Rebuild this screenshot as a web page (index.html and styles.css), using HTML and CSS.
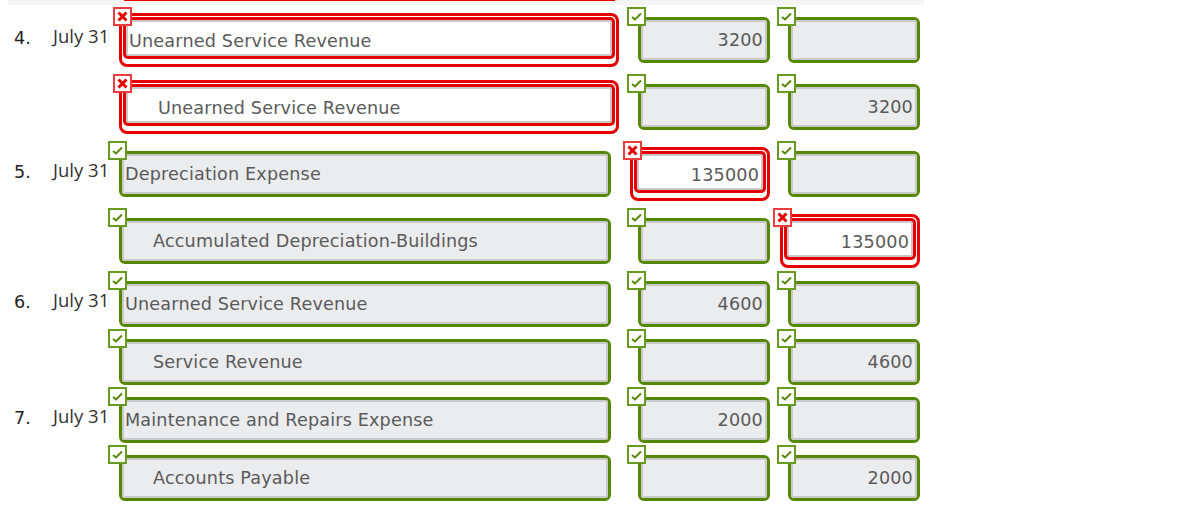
FILE: index.html
```html
<!DOCTYPE html>
<html lang="en">
<head>
  <meta charset="UTF-8">
  <title>Journal Entries</title>
  <link rel="stylesheet" href="styles.css">
</head>
<body>
  <svg class="defs" width="0" height="0">
    <symbol id="tick" viewBox="0 0 15 15"><path d="M3 8 L6 10.5 L12 4.5" fill="none" stroke="#558800" stroke-width="2"/></symbol>
    <symbol id="cross" viewBox="0 0 15 15"><path d="M3.5 3.5 L11.5 11.5 M11.5 3.5 L3.5 11.5" fill="none" stroke="#e60000" stroke-width="3"/></symbol>
  </svg>

  <div class="strip"><div class="prev-edge"></div></div>

  <div class="row first">
    <div class="num">4.</div>
    <div class="date">July 31</div>
    <div class="field account bad"><svg class="badge"><use href="#cross"/></svg><div class="val">Unearned Service Revenue</div></div>
    <div class="field debit"><svg class="badge"><use href="#tick"/></svg><div class="val">3200</div></div>
    <div class="field credit"><svg class="badge"><use href="#tick"/></svg><div class="val"></div></div>
  </div>
  <div class="row loose">
    <div class="num"></div>
    <div class="date"></div>
    <div class="field account bad"><svg class="badge"><use href="#cross"/></svg><div class="val indent">Unearned Service Revenue</div></div>
    <div class="field debit"><svg class="badge"><use href="#tick"/></svg><div class="val"></div></div>
    <div class="field credit"><svg class="badge"><use href="#tick"/></svg><div class="val">3200</div></div>
  </div>

  <div class="row loose">
    <div class="num">5.</div>
    <div class="date">July 31</div>
    <div class="field account"><svg class="badge"><use href="#tick"/></svg><div class="val">Depreciation Expense</div></div>
    <div class="field debit bad"><svg class="badge"><use href="#cross"/></svg><div class="val">135000</div></div>
    <div class="field credit"><svg class="badge"><use href="#tick"/></svg><div class="val"></div></div>
  </div>
  <div class="row loose">
    <div class="num"></div>
    <div class="date"></div>
    <div class="field account"><svg class="badge"><use href="#tick"/></svg><div class="val indent">Accumulated Depreciation-Buildings</div></div>
    <div class="field debit"><svg class="badge"><use href="#tick"/></svg><div class="val"></div></div>
    <div class="field credit bad"><svg class="badge"><use href="#cross"/></svg><div class="val">135000</div></div>
  </div>

  <div class="row mid">
    <div class="num">6.</div>
    <div class="date">July 31</div>
    <div class="field account"><svg class="badge"><use href="#tick"/></svg><div class="val">Unearned Service Revenue</div></div>
    <div class="field debit"><svg class="badge"><use href="#tick"/></svg><div class="val">4600</div></div>
    <div class="field credit"><svg class="badge"><use href="#tick"/></svg><div class="val"></div></div>
  </div>
  <div class="row tight">
    <div class="num"></div>
    <div class="date"></div>
    <div class="field account"><svg class="badge"><use href="#tick"/></svg><div class="val indent">Service Revenue</div></div>
    <div class="field debit"><svg class="badge"><use href="#tick"/></svg><div class="val"></div></div>
    <div class="field credit"><svg class="badge"><use href="#tick"/></svg><div class="val">4600</div></div>
  </div>

  <div class="row tight">
    <div class="num">7.</div>
    <div class="date">July 31</div>
    <div class="field account"><svg class="badge"><use href="#tick"/></svg><div class="val">Maintenance and Repairs Expense</div></div>
    <div class="field debit"><svg class="badge"><use href="#tick"/></svg><div class="val">2000</div></div>
    <div class="field credit"><svg class="badge"><use href="#tick"/></svg><div class="val"></div></div>
  </div>
  <div class="row tight">
    <div class="num"></div>
    <div class="date"></div>
    <div class="field account"><svg class="badge"><use href="#tick"/></svg><div class="val indent">Accounts Payable</div></div>
    <div class="field debit"><svg class="badge"><use href="#tick"/></svg><div class="val"></div></div>
    <div class="field credit"><svg class="badge"><use href="#tick"/></svg><div class="val">2000</div></div>
  </div>
</body>
</html>
```

FILE: styles.css
```css
* {
  margin: 0;
  padding: 0;
  box-sizing: border-box;
}

body {
  font-family: 'Open Sans', sans-serif;
  background: #ffffff;
  color: #333333;
  overflow: hidden;
}

.defs {
  display: block;
  height: 0;
}

.strip {
  width: 916px;
  height: 5px;
  margin-left: 8px;
  background: #f5f5f5;
}

.prev-edge {
  width: 491px;
  height: 1px;
  margin-left: 116px;
  background: #e60000;
}

.row {
  display: grid;
  grid-template-columns: 39px 66px 492px 159px 150px;
  height: 46px;
  padding-left: 14px;
}

.first { margin-top: 12px; }
.loose { margin-top: 21px; }
.mid { margin-top: 17px; }
.tight { margin-top: 12px; }

.num {
  padding-top: 11px;
  font-family: 'DejaVu Sans', sans-serif;
  font-size: 17.6px;
  line-height: 20px;
  color: #222222;
}

.date {
  padding-top: 9px;
  font-size: 18.5px;
  line-height: 20px;
  color: #333333;
}

.field {
  position: relative;
  height: 46px;
  border: 3px solid #558800;
  border-radius: 6px;
}

.account { width: 492px; }
.debit { width: 132px; justify-self: end; }
.credit { width: 132px; justify-self: end; }

.val {
  height: 100%;
  padding: 0 2px 0 1px;
  border: 2px solid #c9c9c9;
  border-radius: 3px;
  background: #ebecee;
  font-family: 'DejaVu Sans', sans-serif;
  font-size: 17.6px;
  letter-spacing: 0.17px;
  line-height: 36px;
  color: #5a5a5a;
  white-space: nowrap;
}

.debit .val,
.credit .val {
  text-align: right;
}

.indent {
  padding-left: 29px;
}

.field.bad {
  height: 54px;
  margin-top: -4px;
  padding: 1px;
  border-color: #e60000;
  background: #ffffff;
  border-radius: 8px;
}

.field.bad .val {
  background: #ffffff;
  box-shadow: 0 0 0 3px #e60000;
  margin: 3px;
  height: 36px;
  border-radius: 2px;
  line-height: 38px;
}

.field.bad .indent {
  padding-left: 30px;
}

.account.bad { width: 500px; }
.debit.bad,
.credit.bad { width: 140px; }

.badge {
  position: absolute;
  top: -13px;
  left: -14px;
  width: 19px;
  height: 19px;
  border: 2px solid #679a1e;
  background: #ffffff;
}

.bad .badge {
  top: -9px;
  left: -9px;
  border-color: #ee3b3b;
}

.debit.bad .badge,
.credit.bad .badge {
  left: -10px;
}
```
